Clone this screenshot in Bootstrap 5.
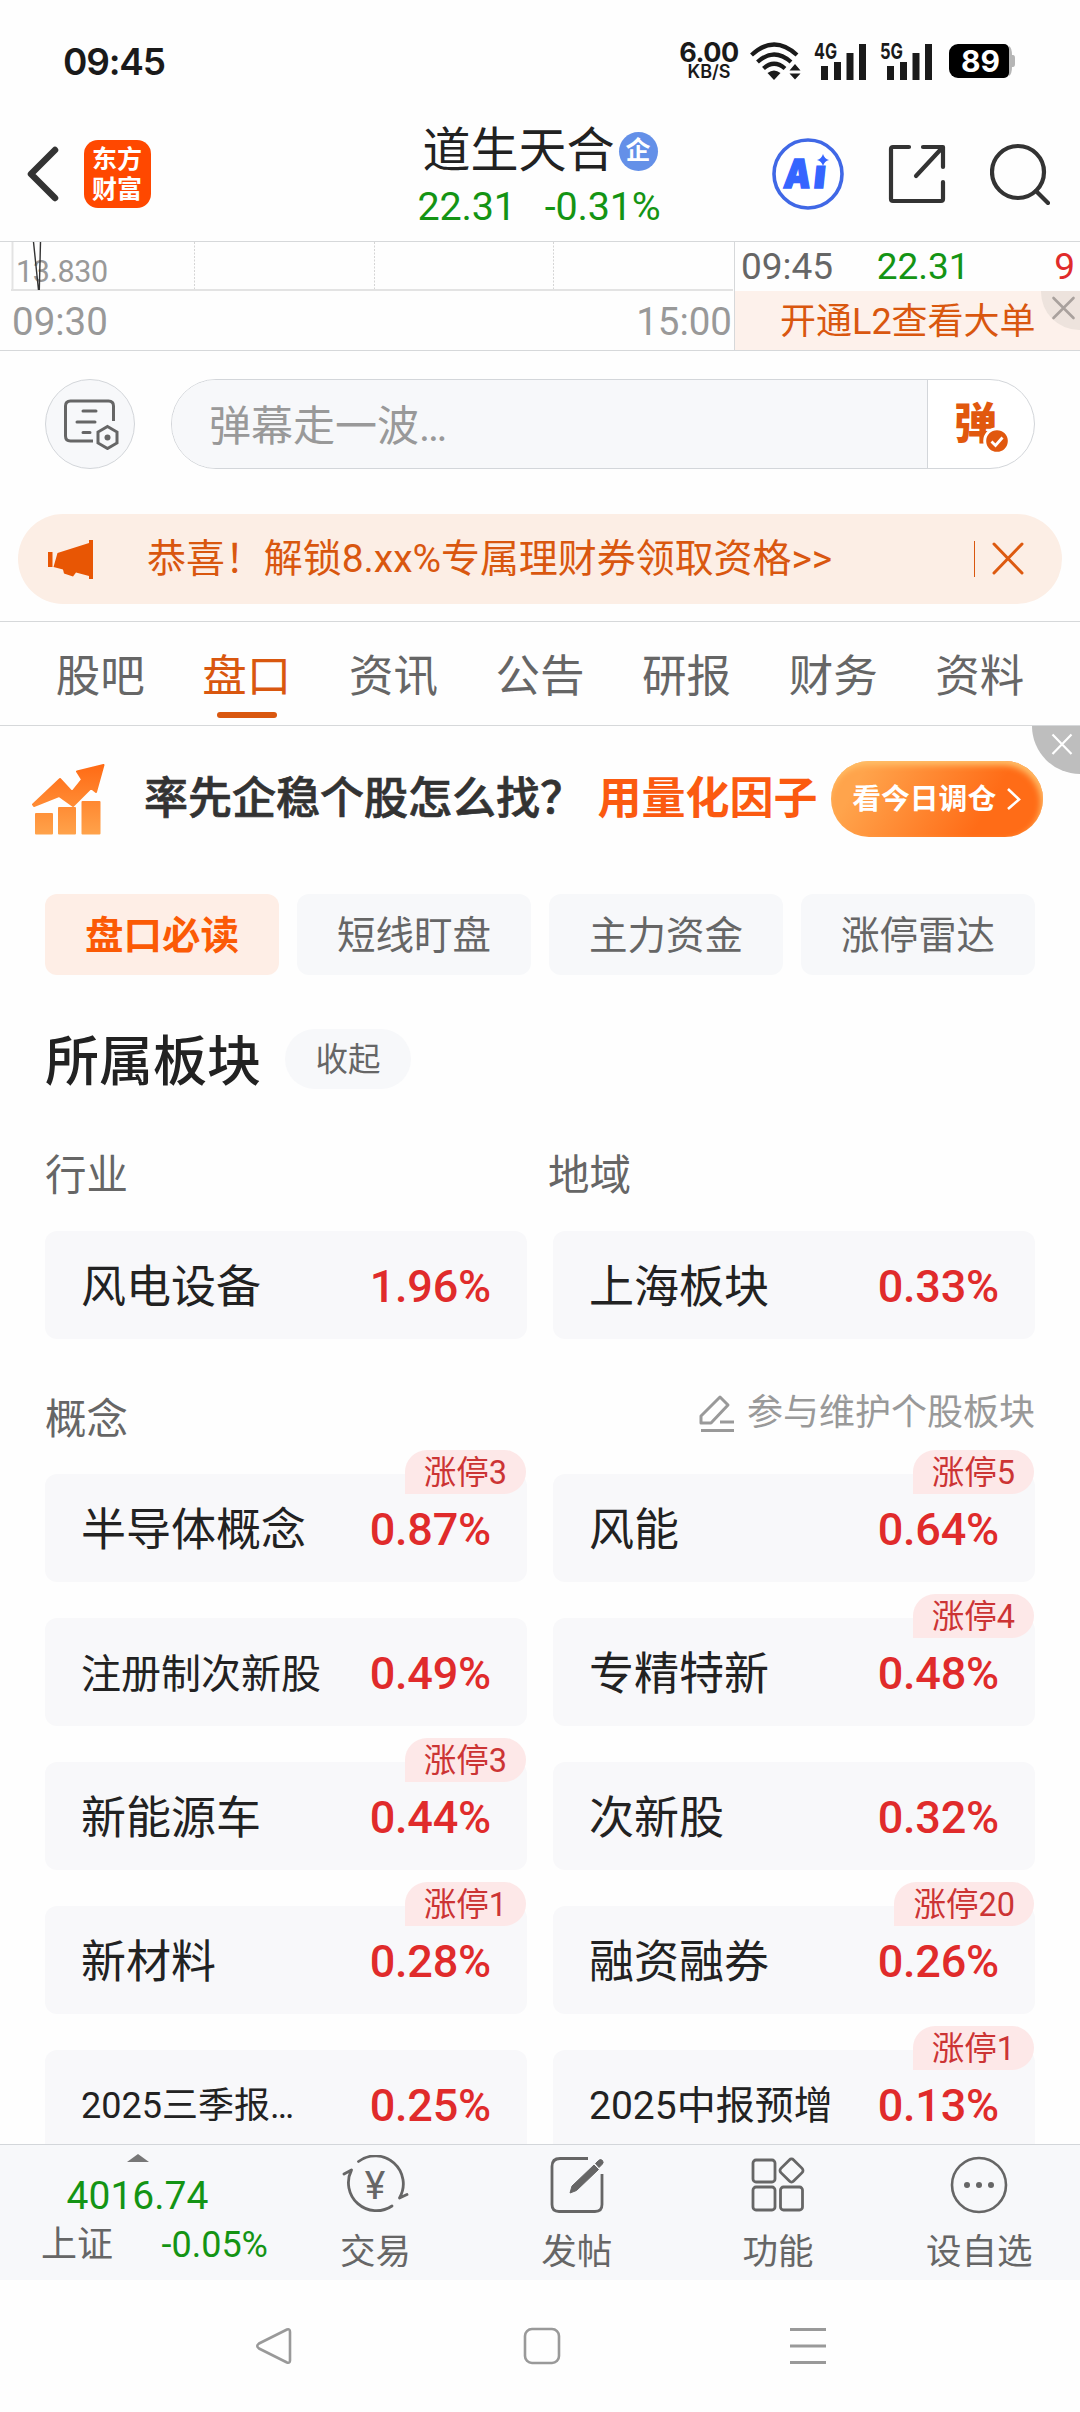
<!DOCTYPE html>
<html lang="zh-CN">
<head>
<meta charset="utf-8">
<meta name="viewport" content="width=device-width, initial-scale=1">
<title>道生天合</title>
<link href="https://cdn.jsdelivr.net/npm/bootstrap@5.3.0/dist/css/bootstrap.min.css" rel="stylesheet">
<style>
  body{font-family:Roboto,"Noto Sans CJK SC",sans-serif;color:#222;background:#fefefe;line-height:1}
  svg{display:block;flex:none}
  .screen{width:1080px;height:2412px;overflow:hidden;background:#fefefe}
  .c-up{color:#e02b2b}.c-down{color:#149414}.c-brand{color:#d9570f}.c-gray{color:#666}.c-soft{color:#999}
  .statusbar{height:106px;padding:16px 65px 0 63px;font-family:Inter,sans-serif;color:#1a1a1a}
  .clock{font-size:37px;font-weight:600;letter-spacing:-1.2px}
  .speed{width:60px;font-weight:700;line-height:1;margin-right:11px}
  .speed b{font-size:27px;font-weight:700;letter-spacing:-.5px;line-height:21px;height:22px}
  .speed i{font-style:normal;font-size:18px;font-weight:600;line-height:16px}
  .signal{width:52px;height:38px;overflow:visible}
  .signal text{font:700 22px Inter,sans-serif;fill:#1a1a1a}
  .batt{width:60px;height:34px;background:#000;border-radius:9px 5px 5px 9px;color:#fff;font-size:30px;font-weight:700;line-height:35px;padding-left:3px}
  .batt-tip{width:6px;height:30px}
  .topbar{height:135px;padding:0 30px 0 27px}
  .app-logo{width:67px;height:68px;border-radius:14px;background:#ff4800;color:#fff;font-size:25px;font-weight:700;line-height:30px;margin-left:24.5px;padding-top:2px}
  .stock{font-size:48px;line-height:58px;padding-left:3px}
  .qi{width:39px;height:39px;border-radius:50%;background:#6490e8;color:#fff;font-size:25px;font-weight:700;line-height:37px;margin-left:4px}
  .quote{font-size:39.5px;line-height:53px;letter-spacing:-.2px;margin:0 -3px 0 -2px}
  .chartrow{height:110px;border-top:1px solid #d6d8da;border-bottom:1px solid #d6d8da}
  .chart-l{width:735px;border-right:1px solid #d6d8da}
  .plot{height:49px}
  .plot svg{position:absolute;left:0;top:0}
  .plot span{position:absolute;left:16px;top:14px;font-size:30.5px;line-height:32px;letter-spacing:-.3px}
  .axis{height:59px;font-size:38.5px;line-height:61px;padding:0 2px 0 12px}
  .tick-row{height:49px;font-size:37px;line-height:49px;padding:0 5px 0 6px}
  .l2{height:59px;background:#fdf1eb;font-size:36px;line-height:62px;padding-left:45px}
  .l2-x{position:absolute;right:0;top:0;width:39px;height:39px;background:#ede3dd;border-bottom-left-radius:38px}
  .danmu{height:163px;padding:28px 45px 0}
  .danmu-set{width:90px;height:90px;border-radius:50%;border:1px solid #d3d6da;background:#f7f8fa}
  .danmu-in{height:90px;margin-left:36px;border-radius:45px;border:1px solid #d3d6da;overflow:hidden;background:#fff}
  .danmu-in .ph{background:#f7f8fa;width:757px;border-right:1px solid #d3d6da;font-size:42px;line-height:94px;padding-left:37px}
  .dan{width:106px;font-size:43px;font-weight:900;line-height:88px;color:#e1580e;padding-left:26px}
  .dan svg{position:absolute;left:55px;top:47px}
  .notice{height:90px;margin:0 18px;border-radius:45px;background:#fceee5;font-size:39px;line-height:91px;padding:0 38px 0 29px;letter-spacing:-.05px}
  .notice .bar{width:1px;height:36px;background:#d9570f;margin-right:17px}
  .tabs{margin-top:17px;height:105px;border-top:1px solid #d6d8da;border-bottom:1px solid #d6d8da;padding:0 27px}
  .tabs .nav-link{padding:0;color:#666;font-size:44.5px;line-height:111px;height:103px}
  .tabs .nav-link.active{color:#d9570f}
  .tabs .active::after{content:"";position:absolute;left:50%;bottom:7px;width:60px;height:6px;margin-left:-30px;border-radius:3px;background:#d9570f}
  .promo{height:168px;padding:0 37px 22px 32px;font-size:44px;font-weight:700;color:#333}
  .promo .t1{margin-left:39px;width:454px;white-space:nowrap;font-weight:500;-webkit-text-stroke:.7px #333}
  .promo .t2{color:#fb5a10;width:234px;font-weight:700}
  .promo-btn{width:212px;height:76px;border-radius:38px;background:linear-gradient(120deg,#ffa44c 15%,#ff6c17 72%);box-shadow:inset -2px 4px 6px #ffc06a;color:#fff;font-size:28.8px;padding:0 21px}
  .promo-x{position:absolute;right:0;top:0;width:48px;height:48px;background:#bebebe;border-bottom-left-radius:48px}
  .chips{padding:0 45px;gap:18px}
  .chips .btn{flex:1 1 0;height:81px;padding:0;border:0;border-radius:12px;background:#f7f8fa;color:#666;font-size:38.5px;line-height:84px}
  .chips .btn.active{background:#feeee6;color:#fb5a05;font-weight:700}
  .sec-h{height:60px;margin:54px 45px 0}
  .sec-h h2{font-size:54px;font-weight:500;line-height:66px;margin:0;padding-top:8px;color:#222}
  .fold{width:126px;height:60px;border-radius:30px;background:#f7f8fa;font-size:32.5px;line-height:63px;margin-left:24px}
  .lab{font-size:41.5px;line-height:61px;height:60px}
  .plates{--bs-gutter-x:26px;--bs-gutter-y:36px;margin-left:-13px;margin-right:-13px}
  .plate{height:108px;border-radius:12px;background:#f8f8fa;padding:0 36px;font-size:45px;line-height:113px;white-space:nowrap}
  .plate .pct{font-weight:500;letter-spacing:-.2px;line-height:112px}
  .n40{font-size:40px}.n39{font-size:39px}.n36{font-size:36px}
  .hot{position:absolute;right:1px;top:-24px;height:44px;border-radius:22px 22px 22px 0;background:#fde8e8;color:#cc3434;font-size:32.5px;line-height:46px;padding:0 19px}
  .dock{height:136px;background:#f7f8fa;border-top:1px solid #d3d6da}
  .dock .idx{width:275px}
  .dock .fn{flex:1 1 0;font-size:35.5px;padding-top:10px}
  .dock .fn div{line-height:42px;margin-top:16px}
  .sysnav{height:132px}
</style>
</head>
<body>
<div class="screen d-flex flex-column position-relative">

  <header class="statusbar d-flex align-items-center justify-content-between flex-shrink-0">
    <div class="clock">09:45</div>
    <div class="d-flex align-items-center">
      <div class="speed d-flex flex-column align-items-center"><b>6.00</b><i>KB/S</i></div>
      <svg width="52" height="38" viewBox="0 0 52 38" fill="none" stroke="#1a1a1a" stroke-width="4.2">
        <path d="M1.500 13Q24 -8 47 13M7.500 20Q24 5 41 20M13.500 26.500Q24 17 35 26.500"/>
        <path d="M17.500 31Q24 26 30.500 31L24 38Z" fill="#1a1a1a" stroke="none"/>
        <path d="M45 22l5.500 6.500h-11zM45 37.500l5.500-6h-11z" fill="#1a1a1a" stroke="none"/>
      </svg>
      <svg class="signal" viewBox="0 0 52 38" style="margin-left:11px"><text x="1" y="17" textLength="23" lengthAdjust="spacingAndGlyphs">4G</text><path d="M8 24h7v14h-7zM21 20h7v18h-7zM33.500 11h7v27h-7zM46 2h7v36h-7z" fill="#1a1a1a"/></svg>
      <svg class="signal" viewBox="0 0 52 38" style="margin-left:14px"><text x="1" y="17" textLength="23" lengthAdjust="spacingAndGlyphs">5G</text><path d="M8 24h7v14h-7zM21 20h7v18h-7zM33.500 11h7v27h-7zM46 2h7v36h-7z" fill="#1a1a1a"/></svg>
      <div class="batt text-center" style="margin-left:18px">89</div>
      <svg class="batt-tip" viewBox="0 0 6 30"><path d="M0 0Q3 2 3 9h1q2 0 2 3v6q0 3-2 3H3q0 7-3 9z" fill="#b5b5b5"/></svg>
    </div>
  </header>

  <nav class="topbar d-flex align-items-center flex-shrink-0">
    <div class="d-flex align-items-center" style="flex:1 1 0">
      <svg width="32" height="56" viewBox="0 0 32 56" fill="none" stroke="#333" stroke-width="6.500" stroke-linecap="round" stroke-linejoin="round"><path d="M28 4L4 28 28 52"/></svg>
      <div class="app-logo d-flex flex-column align-items-center justify-content-center"><span>东方</span><span>财富</span></div>
    </div>
    <div class="pt-2">
      <div class="stock d-flex align-items-center"><span>道生天合</span><span class="qi text-center">企</span></div>
      <div class="quote c-down d-flex justify-content-between"><span>22.31</span><span>-0.31%</span></div>
    </div>
    <div class="d-flex align-items-center justify-content-end" style="flex:1 1 0">
      <svg width="72" height="74" viewBox="0 0 72 74"><circle cx="36" cy="37" r="34" fill="#fff" stroke="#4068e6" stroke-width="3.600"/><g fill="#3565ff" stroke="#3565ff" stroke-width="1.500" font-family="Inter,sans-serif" font-weight="900" font-size="40" transform="translate(6 0) skewX(-6)"><text x="10" y="51" textLength="27" lengthAdjust="spacingAndGlyphs">A</text><text x="40" y="51">ı</text></g><path d="M51 17q1.500 5 6 6-4.500 1-6 6-1.500-5-6-6 4.500-1 6-6z" fill="#3565ff"/></svg>
      <svg width="58" height="60" viewBox="0 0 58 60" fill="none" stroke="#333" stroke-width="4.200" stroke-linecap="round" stroke-linejoin="round" style="margin-left:44px"><path d="M21 3H5Q3 3 3 5v50q0 2 2 2h48q2 0 2-2V38M35 3h20v20M54 4L28 32"/></svg>
      <svg width="60" height="62" viewBox="0 0 60 62" fill="none" stroke="#333" stroke-width="4.200" stroke-linecap="round" style="margin-left:44px"><circle cx="28" cy="29" r="26"/><path d="M46 48l12 12"/></svg>
    </div>
  </nav>

  <section class="chartrow d-flex flex-shrink-0">
    <div class="chart-l">
      <div class="plot position-relative">
        <svg width="734" height="50" viewBox="0 0 734 50" fill="none"><path d="M12.500 0V48M11 48H733" stroke="#e3e3e3" stroke-width="2"/><path d="M194.500 0V47M374.500 0V47M553.500 0V47" stroke="#d5d5d5" stroke-dasharray="2 1.500"/></svg>
        <span class="c-soft">13.830</span>
        <svg width="60" height="49" viewBox="0 0 60 49" fill="none" stroke="#333" stroke-width="1.400"><path d="M33.500 0L38.500 48M40.500 0L39.300 48"/></svg>
      </div>
      <div class="axis c-soft d-flex justify-content-between"><span>09:30</span><span>15:00</span></div>
    </div>
    <div class="flex-grow-1">
      <div class="tick-row d-flex justify-content-between"><span class="c-gray">09:45</span><span class="c-down" style="margin-left:-41px">22.31</span><span class="c-up">9</span></div>
      <div class="l2 c-brand position-relative">开通L2查看大单
        <span class="l2-x"><svg width="39" height="39" viewBox="0 0 39 39" stroke="#a9a19d" stroke-width="2.600" stroke-linecap="round"><path d="M12.500 7l20 20M32.500 7l-20 20"/></svg></span>
      </div>
    </div>
  </section>

  <section class="danmu d-flex flex-shrink-0">
    <div class="danmu-set d-flex align-items-center justify-content-center flex-shrink-0">
      <svg width="56" height="52" viewBox="0 0 56 52" fill="none" stroke="#666" stroke-width="3" style="margin-left:2px"><path d="M50.500 23V8q0-5-5-5h-38q-5 0-5 5v30q0 5 5 5H30" /><path d="M20 13h13M14 24h18M20 34.500h7" stroke-linecap="round"/><path d="M44.500 29.500l9.500 5.500v11l-9.500 5.500L35 46V35z" transform="translate(0 -1)"/><circle cx="44.500" cy="39.500" r="3" fill="#666" stroke="none"/></svg>
    </div>
    <div class="danmu-in d-flex flex-grow-1">
      <div class="ph c-soft">弹幕走一波…</div>
      <div class="dan position-relative">弹<svg width="28" height="28" viewBox="0 0 28 28"><circle cx="14" cy="14" r="12.300" fill="#e1580e" stroke="#fff" stroke-width="3"/><path d="M8.500 14.500l4 4 7-8" fill="none" stroke="#fff" stroke-width="2.800"/></svg></div>
    </div>
  </section>

  <section class="notice c-brand d-flex align-items-center flex-shrink-0">
    <svg width="48" height="42" viewBox="0 0 48 42" fill="#e85604" style="margin-right:52px"><path d="M1 14h4.500v15H1zM10.500 15L42 5V2h4v39h-4v-3l-13-3.500-3 4-9-3-1-4-9.500-2.500z"/></svg>
    <span class="flex-grow-1">恭喜！解锁8.xx%专属理财券领取资格&gt;&gt;</span>
    <span class="bar"></span>
    <svg width="32" height="34" viewBox="0 0 32 34" stroke="#dd5a10" stroke-width="3" stroke-linecap="round"><path d="M2 2l28 29M30 2L2 31"/></svg>
  </section>

  <ul class="tabs nav nav-fill flex-nowrap flex-shrink-0 list-unstyled mb-0">
    <li class="nav-item w-100"><a class="nav-link">股吧</a></li>
    <li class="nav-item w-100"><a class="nav-link active position-relative">盘口</a></li>
    <li class="nav-item w-100"><a class="nav-link">资讯</a></li>
    <li class="nav-item w-100"><a class="nav-link">公告</a></li>
    <li class="nav-item w-100"><a class="nav-link">研报</a></li>
    <li class="nav-item w-100"><a class="nav-link">财务</a></li>
    <li class="nav-item w-100"><a class="nav-link">资料</a></li>
  </ul>

  <section class="promo d-flex align-items-center position-relative flex-shrink-0">
    <svg width="73" height="71" viewBox="0 0 73 71"><defs><linearGradient id="og" x1="0" y1="0" x2="0" y2="71" gradientUnits="userSpaceOnUse"><stop stop-color="#ff6a14"/><stop offset="1" stop-color="#ffa34b"/></linearGradient></defs><path fill="url(#og)" stroke="url(#og)" stroke-linejoin="round" stroke-width="2" d="M1 40.500L28 15l12 13L50 15.500 45 7.500 71.500 1 64 28l-5-4L41 42 27 32 2 42zM4 50h16v19.500H4zM27 44h16v25.500H27zM50.500 38h17v31.500h-17z"/></svg>
    <span class="t1">率先企稳个股怎么找？</span>
    <span class="t2">用量化因子</span>
    <span class="promo-btn d-flex align-items-center justify-content-between text-nowrap"><span>看今日调仓</span><svg width="16" height="24" viewBox="0 0 16 24" fill="none" stroke="#fff" stroke-width="2.600"><path d="M2 2l11 10.500L2 22"/></svg></span>
    <span class="promo-x"><svg width="48" height="48" viewBox="0 0 48 48" stroke="#fff" stroke-width="2.200"><path d="M20.500 8.500l19 19.500M39.500 8.500l-19 19.500"/></svg></span>
  </section>

  <section class="chips d-flex flex-shrink-0">
    <button class="btn active">盘口必读</button><button class="btn">短线盯盘</button><button class="btn">主力资金</button><button class="btn">涨停雷达</button>
  </section>

  <div class="sec-h d-flex align-items-center flex-shrink-0"><h2>所属板块</h2><span class="fold c-gray text-center">收起</span></div>

  <main class="flex-grow-1 overflow-hidden" style="min-height:0;padding:56px 45px 0">
    <div class="d-flex c-gray lab"><span style="width:503px">行业</span><span>地域</span></div>
    <div class="row plates" style="margin-top:-10px">
      <div class="col-6"><div class="plate d-flex justify-content-between"><span>风电设备</span><span class="pct c-up">1.96%</span></div></div>
      <div class="col-6"><div class="plate d-flex justify-content-between"><span>上海板块</span><span class="pct c-up">0.33%</span></div></div>
    </div>
    <div class="d-flex justify-content-between c-gray lab" style="margin-top:50px"><span>概念</span>
      <span class="c-soft d-flex align-items-center n36" style="margin-top:-11px"><svg width="38" height="40" viewBox="0 0 38 40" fill="none" stroke="#999" stroke-width="3" stroke-linejoin="round" style="margin-right:11px"><path d="M3 28v-6L22 3l8 8-17 18H3zM22 28h14M3 36.500h33"/></svg>参与维护个股板块</span></div>
    <div class="row plates" style="margin-top:-11px">
      <div class="col-6"><div class="plate position-relative d-flex justify-content-between"><span>半导体概念</span><span class="pct c-up">0.87%</span><span class="hot">涨停3</span></div></div>
      <div class="col-6"><div class="plate position-relative d-flex justify-content-between"><span>风能</span><span class="pct c-up">0.64%</span><span class="hot">涨停5</span></div></div>
      <div class="col-6"><div class="plate position-relative d-flex justify-content-between"><span class="n40">注册制次新股</span><span class="pct c-up">0.49%</span></div></div>
      <div class="col-6"><div class="plate position-relative d-flex justify-content-between"><span>专精特新</span><span class="pct c-up">0.48%</span><span class="hot">涨停4</span></div></div>
      <div class="col-6"><div class="plate position-relative d-flex justify-content-between"><span>新能源车</span><span class="pct c-up">0.44%</span><span class="hot">涨停3</span></div></div>
      <div class="col-6"><div class="plate position-relative d-flex justify-content-between"><span>次新股</span><span class="pct c-up">0.32%</span></div></div>
      <div class="col-6"><div class="plate position-relative d-flex justify-content-between"><span>新材料</span><span class="pct c-up">0.28%</span><span class="hot">涨停1</span></div></div>
      <div class="col-6"><div class="plate position-relative d-flex justify-content-between"><span>融资融券</span><span class="pct c-up">0.26%</span><span class="hot">涨停20</span></div></div>
      <div class="col-6"><div class="plate position-relative d-flex justify-content-between"><span class="n36">2025三季报…</span><span class="pct c-up">0.25%</span></div></div>
      <div class="col-6"><div class="plate position-relative d-flex justify-content-between"><span class="n39">2025中报预增</span><span class="pct c-up">0.13%</span><span class="hot">涨停1</span></div></div>
    </div>
  </main>

  <footer class="dock d-flex flex-shrink-0">
    <div class="idx d-flex flex-column align-items-center">
      <svg width="22" height="8" viewBox="0 0 22 8" style="margin-top:9px"><path d="M11 0l11 8H0z" fill="#777"/></svg>
      <div class="c-down" style="font-size:39px;line-height:48px;margin-top:10px">4016.74</div>
      <div class="d-flex align-self-stretch justify-content-between" style="font-size:36px;line-height:51px;padding:0 7px 0 41px"><span class="c-gray">上证</span><span class="c-down">-0.05%</span></div>
    </div>
    <div class="fn c-gray d-flex flex-column align-items-center">
      <svg width="68" height="60" viewBox="1 0 68 60" fill="none" stroke="#666" stroke-width="2.800" stroke-linecap="round" stroke-linejoin="round"><path d="M17.500 6.500A28 28 0 0 1 58.500 43L66 39.500M51 51A28 28 0 0 1 10.500 15L3 19"/><text x="34" y="44" text-anchor="middle" font-size="39" fill="#666" stroke="none">¥</text></svg>
      <div>交易</div>
    </div>
    <div class="fn c-gray d-flex flex-column align-items-center">
      <svg width="56" height="60" viewBox="0 0 56 60" fill="none" stroke="#666" stroke-width="2.800"><path d="M39 3.500H11q-8 0-8 8v38q0 7 7 7h36q7 0 7-7V19"/><path d="M21 38l2-7 22-21 4.500 4.500-22 21zM46.500 8.500l3-3q2-2 4 0 1.500 2-.5 4l-3 3z" fill="#666" stroke="#666" stroke-width="1"/></svg>
      <div>发帖</div>
    </div>
    <div class="fn c-gray d-flex flex-column align-items-center">
      <svg width="54" height="60" viewBox="0 0 54 60" fill="none" stroke="#666" stroke-width="2.800"><rect x="2" y="5" width="22" height="22" rx="3"/><rect x="2" y="32" width="22" height="23" rx="3"/><rect x="29.500" y="32" width="22" height="23" rx="3"/><rect x="31.500" y="6.500" width="18" height="18" rx="3" transform="rotate(45 40.500 15.500)"/></svg>
      <div>功能</div>
    </div>
    <div class="fn c-gray d-flex flex-column align-items-center">
      <svg width="60" height="60" viewBox="0 0 60 60"><circle cx="30" cy="30" r="27" fill="none" stroke="#666" stroke-width="2.600"/><g fill="#666"><circle cx="18" cy="30" r="3"/><circle cx="30" cy="30" r="3"/><circle cx="42" cy="30" r="3"/></g></svg>
      <div>设自选</div>
    </div>
  </footer>

  <div class="sysnav d-flex align-items-center flex-shrink-0" style="padding-left:255px">
    <svg width="37" height="38" viewBox="0 0 37 38" fill="none" stroke="#999" stroke-width="2.600" stroke-linejoin="round"><path d="M32 2.500L4 16.500q-3.500 2.500 0 5l28 14q3 1 3-2V5q0-3.500-3-2.500z"/></svg>
    <svg width="38" height="38" viewBox="0 0 38 38" fill="none" stroke="#999" stroke-width="2.600" style="margin-left:231px"><rect x="2" y="2" width="34" height="34" rx="7"/></svg>
    <svg width="36" height="38" viewBox="0 0 36 38" stroke="#999" stroke-width="2.800" style="margin-left:229px"><path d="M0 2.500h36M0 19h36M0 35.500h36"/></svg>
  </div>
</div>
<script src="https://cdn.jsdelivr.net/npm/bootstrap@5.3.0/dist/js/bootstrap.bundle.min.js"></script>
</body>
</html>
